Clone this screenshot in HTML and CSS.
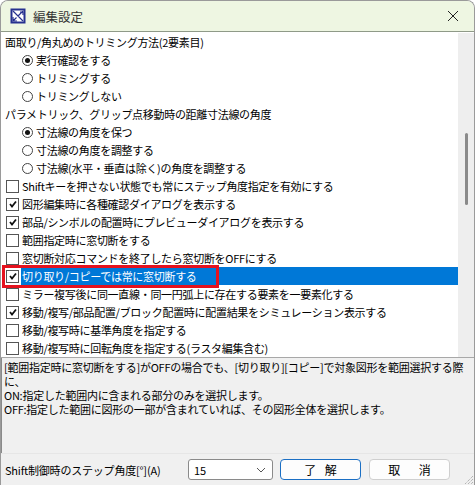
FILE: index.html
```html
<!DOCTYPE html>
<html lang="ja">
<head>
<meta charset="utf-8">
<link rel="stylesheet" href="styles.css">
</head>
<body>
<div class="window">
  <div class="titlebar">
    <svg class="app-icon" width="16" height="16" viewBox="0 0 16 16">
      <rect x="0.5" y="0.5" width="15" height="15" fill="#26318f"/>
      <rect x="2.5" y="2.5" width="11" height="11" fill="#fff"/>
      <path d="M3 3 L13 13 M13 3 L8 8 M3 13 L6.5 9.5 M10 4 L13 4 L13 7 M3 9 L3 13 L7 13" stroke="#26318f" stroke-width="1.2" fill="none"/>
    </svg>
    <span class="title">編集設定</span>
    <svg class="close" width="12" height="12" viewBox="0 0 12 12">
      <path d="M1 1 L11 11 M11 1 L1 11" stroke="#222" stroke-width="1"/>
    </svg>
  </div>
  <div class="main">
    <div class="list">
      <div class="row head">面取り/角丸めのトリミング方法(2要素目)</div>
      <div class="row opt"><span class="radio on"></span>実行確認をする</div>
      <div class="row opt"><span class="radio"></span>トリミングする</div>
      <div class="row opt"><span class="radio"></span>トリミングしない</div>
      <div class="row head">パラメトリック、グリップ点移動時の距離寸法線の角度</div>
      <div class="row opt"><span class="radio on"></span>寸法線の角度を保つ</div>
      <div class="row opt"><span class="radio"></span>寸法線の角度を調整する</div>
      <div class="row opt"><span class="radio"></span>寸法線(水平・垂直は除く)の角度を調整する</div>
      <div class="row cb"><span class="box"></span><span class="lbl">Shiftキーを押さない状態でも常にステップ角度指定を有効にする</span></div>
      <div class="row cb"><span class="box on"><svg width="10" height="10" viewBox="0 0 10 10"><path d="M2 5 L4 7.5 L8 2.5" stroke="#111" stroke-width="1.8" fill="none"/></svg></span><span class="lbl">図形編集時に各種確認ダイアログを表示する</span></div>
      <div class="row cb"><span class="box on"><svg width="10" height="10" viewBox="0 0 10 10"><path d="M2 5 L4 7.5 L8 2.5" stroke="#111" stroke-width="1.8" fill="none"/></svg></span><span class="lbl">部品/シンボルの配置時にプレビューダイアログを表示する</span></div>
      <div class="row cb"><span class="box"></span><span class="lbl">範囲指定時に窓切断をする</span></div>
      <div class="row cb"><span class="box"></span><span class="lbl">窓切断対応コマンドを終了したら窓切断をOFFにする</span></div>
      <div class="row cb selected"><span class="box on"><svg width="10" height="10" viewBox="0 0 10 10"><path d="M2 5 L4 7.5 L8 2.5" stroke="#111" stroke-width="1.8" fill="none"/></svg></span><span class="lbl">切り取り/コピーでは常に窓切断する</span><span class="mark"></span></div>
      <div class="row cb"><span class="box"></span><span class="lbl">ミラー複写後に同一直線・同一円弧上に存在する要素を一要素化する</span></div>
      <div class="row cb"><span class="box on"><svg width="10" height="10" viewBox="0 0 10 10"><path d="M2 5 L4 7.5 L8 2.5" stroke="#111" stroke-width="1.8" fill="none"/></svg></span><span class="lbl">移動/複写/部品配置/ブロック配置時に配置結果をシミュレーション表示する</span></div>
      <div class="row cb"><span class="box"></span><span class="lbl">移動/複写時に基準角度を指定する</span></div>
      <div class="row cb"><span class="box"></span><span class="lbl">移動/複写時に回転角度を指定する(ラスタ編集含む)</span></div>
    </div>
    <div class="scrollbar"><div class="thumb"></div></div>
  </div>
  <div class="desc">
    <div class="line">[範囲指定時に窓切断をする]がOFFの場合でも、[切り取り][コピー]で対象図形を範囲選択する際</div>
    <div class="line">に、</div>
    <div class="line">ON:指定した範囲内に含まれる部分のみを選択します。</div>
    <div class="line">OFF:指定した範囲に図形の一部が含まれていれば、その図形全体を選択します。</div>
  </div>
  <div class="footer">
    <span class="flabel">Shift制御時のステップ角度[°](A)</span>
    <div class="combo"><span>15</span>
      <svg width="10" height="6" viewBox="0 0 10 6"><path d="M1 1 L5 5 L9 1" stroke="#555" stroke-width="1" fill="none"/></svg>
    </div>
    <div class="btn default">了 解</div>
    <div class="btn wide">取 消</div>
    <svg class="grip" width="12" height="12" viewBox="0 0 12 12">
      <path d="M11 3 L3 11 M11 6 L6 11 M11 9 L9 11" stroke="#999" stroke-width="1" stroke-dasharray="1 1"/>
    </svg>
  </div>
</div>
</body>
</html>
```
FILE: styles.css
```css
* { box-sizing: border-box; }
html, body { margin: 0; padding: 0; background: #ffffff; }
body {
  font-family: "Noto Sans CJK JP", "Noto Sans", sans-serif;
  font-size: 11px;
  color: #000;
}
.window {
  width: 475px;
  height: 485px;
  border: 1px solid #9a9a9a;
  border-bottom: none;
  border-radius: 8px 8px 0 0;
  overflow: hidden;
  display: flex;
  flex-direction: column;
  background: #f0f0f0;
}
.titlebar {
  height: 31px;
  flex: none;
  background: #eef6e2;
  border-bottom: 1px solid #8f9a88;
  display: flex;
  align-items: center;
  padding-left: 9px;
  padding-right: 15px;
}
.app-icon { flex: none; }
.title {
  margin-left: 7px;
  font-size: 12.5px;
  color: #333;
  flex: 1;
}
.close { flex: none; }
.main {
  height: 326px;
  flex: none;
  display: flex;
  background: #fff;
  border-bottom: 1px solid #a8a8a8;
}
.list {
  flex: 1;
  padding-top: 1px;
  overflow: hidden;
}
.row {
  height: 18px;
  display: flex;
  align-items: center;
  white-space: nowrap;
  letter-spacing: -0.3px;
  position: relative;
}
.head { padding-left: 4px; }
.opt { padding-left: 21px; }
.radio {
  width: 11px;
  height: 11px;
  border: 1px solid #444;
  border-radius: 50%;
  margin-right: 3px;
  flex: none;
  display: flex;
  align-items: center;
  justify-content: center;
  background: #fff;
}
.radio.on::after {
  content: "";
  width: 5px;
  height: 5px;
  border-radius: 50%;
  background: #111;
}
.cb { padding-left: 5px; }
.box {
  width: 13px;
  height: 13px;
  border: 1px solid #555;
  background: #fff;
  flex: none;
  display: flex;
  align-items: center;
  justify-content: center;
  margin-right: 2px;
}
.lbl {
  flex: 1;
  height: 18px;
  line-height: 18px;
  padding-left: 1px;
}
.selected .lbl {
  background: #0078d7;
  color: #fff;
}
.mark {
  position: absolute;
  left: 1px;
  top: -2px;
  width: 217px;
  height: 23px;
  border: 3px solid #e5121e;
  pointer-events: none;
}
.scrollbar {
  width: 16px;
  flex: none;
  background: #eeeeee;
  position: relative;
  margin-top: 1px;
}
.thumb {
  position: absolute;
  left: 7px;
  top: 100px;
  width: 3px;
  height: 72px;
  border-radius: 2px;
  background: #8a8a8a;
}
.desc {
  height: 95px;
  flex: none;
  padding: 2px 2px 0 2px;
  background: #f0f0f0;
  border-left: 1px solid #8a8a8a;
}
.line {
  white-space: nowrap;
  height: 14px;
  line-height: 14px;
  letter-spacing: -0.25px;
}
.footer {
  flex: 1;
  display: flex;
  align-items: center;
  padding-left: 4px;
  border-top: 1px solid #e6e6e6;
  background: #f0f0f0;
  position: relative;
}
.flabel {
  width: 183px;
  flex: none;
  letter-spacing: -0.2px;
}
.combo {
  width: 85px;
  height: 21px;
  background: #fff;
  border: 1px solid #8a8a8a;
  border-radius: 3px;
  display: flex;
  align-items: center;
  justify-content: space-between;
  padding: 0 6px 0 5px;
  margin-right: 7px;
}
.btn {
  width: 81px;
  height: 21px;
  border: 1px solid #cfcfcf;
  border-radius: 4px;
  background: #fdfdfd;
  display: flex;
  align-items: center;
  justify-content: center;
  font-size: 12px;
  margin-right: 8px;
  letter-spacing: 3px;
  padding-left: 3px;
}
.btn.wide { letter-spacing: 8px; padding-left: 8px; }
.btn.default {
  border: 1.5px solid #1b6fc4;
}
.grip {
  position: absolute;
  right: 0;
  bottom: 0;
}
```
